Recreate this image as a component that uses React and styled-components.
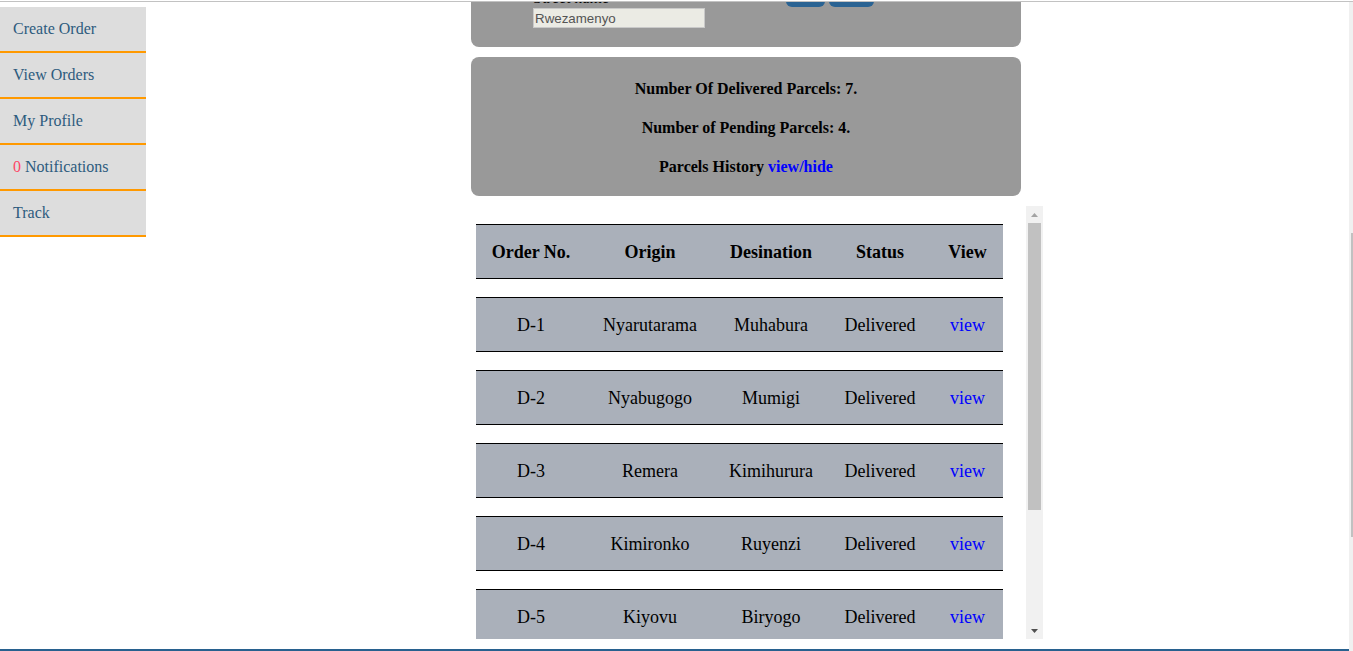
import React from "react";
import styled, { createGlobalStyle } from "styled-components";

const GlobalStyle = createGlobalStyle`
  html, body {
    margin: 0;
    padding: 0;
    height: 100%;
    overflow: hidden;
    background: #fff;
  }
  body {
    font-family: "Liberation Serif", "Times New Roman", serif;
  }
  #root {
    height: 100%;
  }
`;

const Page = styled.div`
  display: flex;
  flex-direction: column;
  height: 651px;
`;

const TopRule = styled.div`
  flex: none;
  height: 1px;
  border-top: 1px solid #fff;
  background: #c2c2c2;
`;

const Frame = styled.div`
  flex: 1;
  display: flex;
  min-height: 0;
`;

const Viewport = styled.div`
  flex: 1;
  display: flex;
  flex-direction: column;
  min-width: 0;
`;

const Content = styled.div`
  flex: 1;
  display: flex;
  align-items: flex-start;
  overflow: hidden;
  min-height: 0;
`;

const FooterEdge = styled.div`
  flex: none;
  height: 2px;
  background: #28618f;
`;

const PageScroll = styled.div`
  flex: none;
  width: 4px;
  box-sizing: border-box;
  padding-left: 2px;
  background: #f0f0f0;
  display: flex;
  flex-direction: column;
`;

const PageThumb = styled.div`
  margin-top: 231px;
  height: 304px;
  background: #c1c1c1;
`;

const Sidebar = styled.nav`
  flex: none;
  width: 146px;
  margin-top: 5px;
  display: flex;
  flex-direction: column;
`;

const NavItem = styled.a`
  display: block;
  background: #ddd;
  border-bottom: 2px solid #f90;
  padding: 13px 13px 13px;
  font-size: 16px;
  line-height: 18px;
  color: #2d5b7e;
  text-decoration: none;
`;

const Count = styled.span`
  color: #ff4766;
`;

const Main = styled.main`
  flex: none;
  width: 572px;
  margin-left: 325px;
  margin-top: -35px;
  display: flex;
  flex-direction: column;
  gap: 10px;
`;

const FormCard = styled.section`
  width: 550px;
  box-sizing: border-box;
  background: #999;
  border-radius: 8px;
  padding: 12px 20px 19px 62px;
`;

const FieldRow = styled.div`
  display: flex;
  align-items: flex-end;
`;

const Label = styled.label`
  width: 253px;
  font-size: 16px;
  line-height: 18px;
  color: #000;
`;

const ButtonGroup = styled.div`
  display: flex;
  gap: 4px;
`;

const ActionButton = styled.button`
  width: ${(p) => p.$w}px;
  height: 28px;
  padding: 0;
  border: none;
  border-radius: 6px;
  background: #2a6393;
  color: #fff;
  font: 13px "Liberation Sans", Arial, sans-serif;
`;

const TextInput = styled.input`
  display: block;
  margin: 1px 0 0;
  width: 172px;
  height: 20px;
  box-sizing: border-box;
  border: 1px solid #c9c9c9;
  background: #ebebe4;
  padding: 0 1px;
  font: 13.33px "Liberation Sans", Arial, sans-serif;
  color: #545454;
  outline: none;
`;

const StatsCard = styled.section`
  width: 550px;
  display: flow-root;
  background: #999;
  border-radius: 8px;
  padding: 2px 0 0;
  text-align: center;
`;

const Stat = styled.h4`
  margin: 21px 0;
  font-size: 16px;
  line-height: 18px;
  font-weight: bold;
  color: #000;

  &:last-child {
    margin-bottom: 20px;
  }
`;

const ToggleLink = styled.a`
  color: #00f;
  text-decoration: none;
`;

const HistoryBox = styled.div`
  display: flex;
  height: 433px;
`;

const HistoryViewport = styled.div`
  width: 555px;
  overflow: hidden;
`;

const Table = styled.table`
  margin-left: 5px;
  width: 527px;
  table-layout: fixed;
  border-collapse: separate;
  border-spacing: 0 18px;
`;

const Th = styled.th`
  width: ${(p) => p.$w}px;
  height: 53px;
  box-sizing: content-box;
  background: #aab0ba;
  border-top: 1px solid #000;
  border-bottom: 1px solid #000;
  padding: 0;
  font-size: 18px;
  line-height: 20px;
  font-weight: bold;
  text-align: center;
  vertical-align: middle;
  color: #000;
`;

const Td = styled.td`
  height: 53px;
  box-sizing: content-box;
  background: #aab0ba;
  border-top: 1px solid #000;
  border-bottom: 1px solid #000;
  padding: 0;
  font-size: 18px;
  line-height: 20px;
  text-align: center;
  vertical-align: middle;
  color: #000;
  white-space: nowrap;
`;

const ViewLink = styled.a`
  color: #00f;
  text-decoration: none;
`;

const ScrollTrack = styled.div`
  flex: none;
  width: 17px;
  background: #f1f1f1;
  display: flex;
  flex-direction: column;
`;

const ScrollArrow = styled.div`
  flex: none;
  height: 17px;
  display: flex;
  align-items: center;
  justify-content: center;
`;

const ScrollThumb = styled.div`
  flex: none;
  height: 287px;
  margin: 0 2px;
  background: #c1c1c1;
`;

const ScrollSpacer = styled.div`
  flex: 1;
`;

const columns = [
  { label: "Order No.", w: 110 },
  { label: "Origin", w: 128 },
  { label: "Desination", w: 114 },
  { label: "Status", w: 104 },
  { label: "View", w: 71 },
];

const orders = [
  { id: "D-1", origin: "Nyarutarama", dest: "Muhabura", status: "Delivered" },
  { id: "D-2", origin: "Nyabugogo", dest: "Mumigi", status: "Delivered" },
  { id: "D-3", origin: "Remera", dest: "Kimihurura", status: "Delivered" },
  { id: "D-4", origin: "Kimironko", dest: "Ruyenzi", status: "Delivered" },
  { id: "D-5", origin: "Kiyovu", dest: "Biryogo", status: "Delivered" },
  { id: "D-6", origin: "Gikondo", dest: "Kicukiro", status: "Delivered" },
  { id: "D-7", origin: "Kacyiru", dest: "Gisozi", status: "Delivered" },
];

const Arrow = ({ dir, color }) => (
  <svg width="7" height="4" viewBox="0 0 7 4">
    {dir === "up" ? (
      <polygon points="0,4 7,4 3.5,0" fill={color} />
    ) : (
      <polygon points="0,0 7,0 3.5,4" fill={color} />
    )}
  </svg>
);

export default function App() {
  return (
    <>
      <GlobalStyle />
      <Page>
        <TopRule />
        <Frame>
          <Viewport>
            <Content>
              <Sidebar>
                <NavItem href="#">Create Order</NavItem>
                <NavItem href="#">View Orders</NavItem>
                <NavItem href="#">My Profile</NavItem>
                <NavItem href="#">
                  <Count>0</Count> Notifications
                </NavItem>
                <NavItem href="#">Track</NavItem>
              </Sidebar>
              <Main>
                <FormCard>
                  <FieldRow>
                    <Label htmlFor="street">Street name</Label>
                    <ButtonGroup>
                      <ActionButton $w={39}>Edit</ActionButton>
                      <ActionButton $w={45}>Save</ActionButton>
                    </ButtonGroup>
                  </FieldRow>
                  <TextInput id="street" defaultValue="Rwezamenyo" disabled />
                </FormCard>
                <StatsCard>
                  <Stat>Number Of Delivered Parcels: 7.</Stat>
                  <Stat>Number of Pending Parcels: 4.</Stat>
                  <Stat>
                    Parcels History <ToggleLink href="#">view/hide</ToggleLink>
                  </Stat>
                </StatsCard>
                <HistoryBox>
                  <HistoryViewport>
                    <Table>
                      <thead>
                        <tr>
                          {columns.map((c) => (
                            <Th key={c.label} $w={c.w}>
                              {c.label}
                            </Th>
                          ))}
                        </tr>
                      </thead>
                      <tbody>
                        {orders.map((o) => (
                          <tr key={o.id}>
                            <Td>{o.id}</Td>
                            <Td>{o.origin}</Td>
                            <Td>{o.dest}</Td>
                            <Td>{o.status}</Td>
                            <Td>
                              <ViewLink href="#">view</ViewLink>
                            </Td>
                          </tr>
                        ))}
                      </tbody>
                    </Table>
                  </HistoryViewport>
                  <ScrollTrack>
                    <ScrollArrow>
                      <Arrow dir="up" color="#a3a3a3" />
                    </ScrollArrow>
                    <ScrollThumb />
                    <ScrollSpacer />
                    <ScrollArrow>
                      <Arrow dir="down" color="#505050" />
                    </ScrollArrow>
                  </ScrollTrack>
                </HistoryBox>
              </Main>
            </Content>
            <FooterEdge />
          </Viewport>
          <PageScroll>
            <PageThumb />
          </PageScroll>
        </Frame>
      </Page>
    </>
  );
}
